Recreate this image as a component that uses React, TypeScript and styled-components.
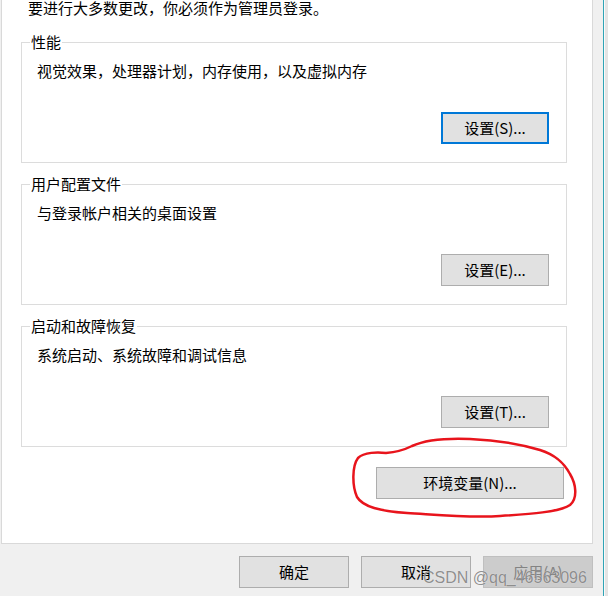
import styled, { createGlobalStyle } from 'styled-components';

const GlobalStyle = createGlobalStyle`
	html, body {
		margin: 0;
		padding: 0;
		background: #f0f0f0;
	}
	body {
		font-family: "Noto Sans CJK SC", "Noto Sans", "Liberation Sans", sans-serif;
		font-size: 15px;
		color: #000;
	}
`;

const Screen = styled.div`
	position: relative;
	display: flex;
	width: 608px;
	height: 596px;
	overflow: hidden;
	background: #f0f0f0;
`;

const Dialog = styled.div`
	display: flex;
	flex-direction: column;
	width: 603px;
	padding-left: 1px;
	padding-right: 10px;
	box-sizing: border-box;
`;

const AccentLine = styled.div`
	width: 1px;
	background: #2fa4b6;
`;

const BehindWindow = styled.div`
	flex: 1;
	background: #e4e4e4;
	border-left: 1px solid #fafafa;
`;

const TabPanel = styled.div`
	display: flex;
	flex-direction: column;
	background: #fff;
	border: 1px solid #d9d9d9;
	border-top: none;
	padding: 0 25px 44px 19px;
	height: 544px;
	box-sizing: border-box;
`;

const Intro = styled.div`
	margin: -2px 0 0 7px;
	line-height: 20px;
	white-space: nowrap;
`;

const GroupBox = styled.fieldset<{ $first?: boolean }>`
	width: 546px;
	box-sizing: border-box;
	margin: ${(p) => (p.$first ? '14px' : '11px')} 0 0 0;
	padding: 0 17px 18px 0;
	border: 1px solid #dcdcdc;
	min-width: 0;
`;

const GroupLabel = styled.legend`
	margin-left: 8px;
	padding: 0 1px;
	line-height: 20px;
`;

const Description = styled.div`
	margin: 9px 0 0 15px;
	line-height: 20px;
	white-space: nowrap;
`;

const ButtonRow = styled.div`
	display: flex;
	justify-content: flex-end;
	margin-top: 31px;
`;

const Button = styled.button<{ $focused?: boolean; $width?: number }>`
	width: ${(p) => p.$width ?? 108}px;
	height: 32px;
	box-sizing: border-box;
	padding: 0;
	background: #e1e1e1;
	border: ${(p) => (p.$focused ? '2px solid #0078d7' : '1px solid #adadad')};
	border-radius: 0;
	font-family: inherit;
	font-size: 15px;
	line-height: 20px;
	color: #000;

	&:disabled {
		background: #cccccc;
		border-color: #bfbfbf;
		color: #838383;
	}
`;

const EnvRow = styled.div`
	display: flex;
	justify-content: flex-end;
	margin: 20px 3px 0 0;
`;

const DialogFooter = styled.div`
	display: flex;
	justify-content: flex-end;
	gap: 12px;
	margin-top: 12px;
`;

const Watermark = styled.div`
	position: absolute;
	left: 423px;
	top: 568px;
	font-family: "Liberation Sans", Arial, sans-serif;
	font-size: 16px;
	line-height: 20px;
	color: rgba(115, 115, 115, 0.8);
	text-shadow: 0 0 1px rgba(255, 255, 255, 0.8);
	white-space: nowrap;
	pointer-events: none;
`;

const Scribble = styled.svg`
	position: absolute;
	left: 0;
	top: 0;
	pointer-events: none;
`;

const groups = [
	{ title: '性能', text: '视觉效果，处理器计划，内存使用，以及虚拟内存', button: '设置(S)...', focused: true },
	{ title: '用户配置文件', text: '与登录帐户相关的桌面设置', button: '设置(E)...' },
	{ title: '启动和故障恢复', text: '系统启动、系统故障和调试信息', button: '设置(T)...' },
];

export default function App() {
	return (
		<>
			<GlobalStyle />
			<Screen>
				<Dialog>
					<TabPanel>
						<Intro>要进行大多数更改，你必须作为管理员登录。</Intro>
						{groups.map((g, i) => (
							<GroupBox key={g.title} $first={i === 0}>
								<GroupLabel>{g.title}</GroupLabel>
								<Description>{g.text}</Description>
								<ButtonRow>
									<Button $focused={g.focused}>{g.button}</Button>
								</ButtonRow>
							</GroupBox>
						))}
						<EnvRow>
							<Button $width={188}>环境变量(N)...</Button>
						</EnvRow>
					</TabPanel>
					<DialogFooter>
						<Button $width={110}>确定</Button>
						<Button $width={110}>取消</Button>
						<Button $width={110} disabled>
							应用(A)
						</Button>
					</DialogFooter>
				</Dialog>
				<AccentLine />
				<BehindWindow />
				<Scribble width="608" height="596" viewBox="0 0 608 596">
					<path
						d="M386 453 C378 452 364 452 358 458 C352 466 352 486 357 497 C363 507 380 511 407 513 C440 515 470 518 500 516 C530 514 560 512 570 505 C578 498 576 484 570 474 C564 463 556 455 540 450 C520 444 495 440 470 439 C445 438 425 440 412 446 C404 450 398 452 386 453"
						fill="none"
						stroke="#e8141c"
						strokeWidth="2.5"
						strokeLinecap="round"
						strokeLinejoin="round"
					/>
				</Scribble>
				<Watermark>CSDN @qq_46563096</Watermark>
			</Screen>
		</>
	);
}
